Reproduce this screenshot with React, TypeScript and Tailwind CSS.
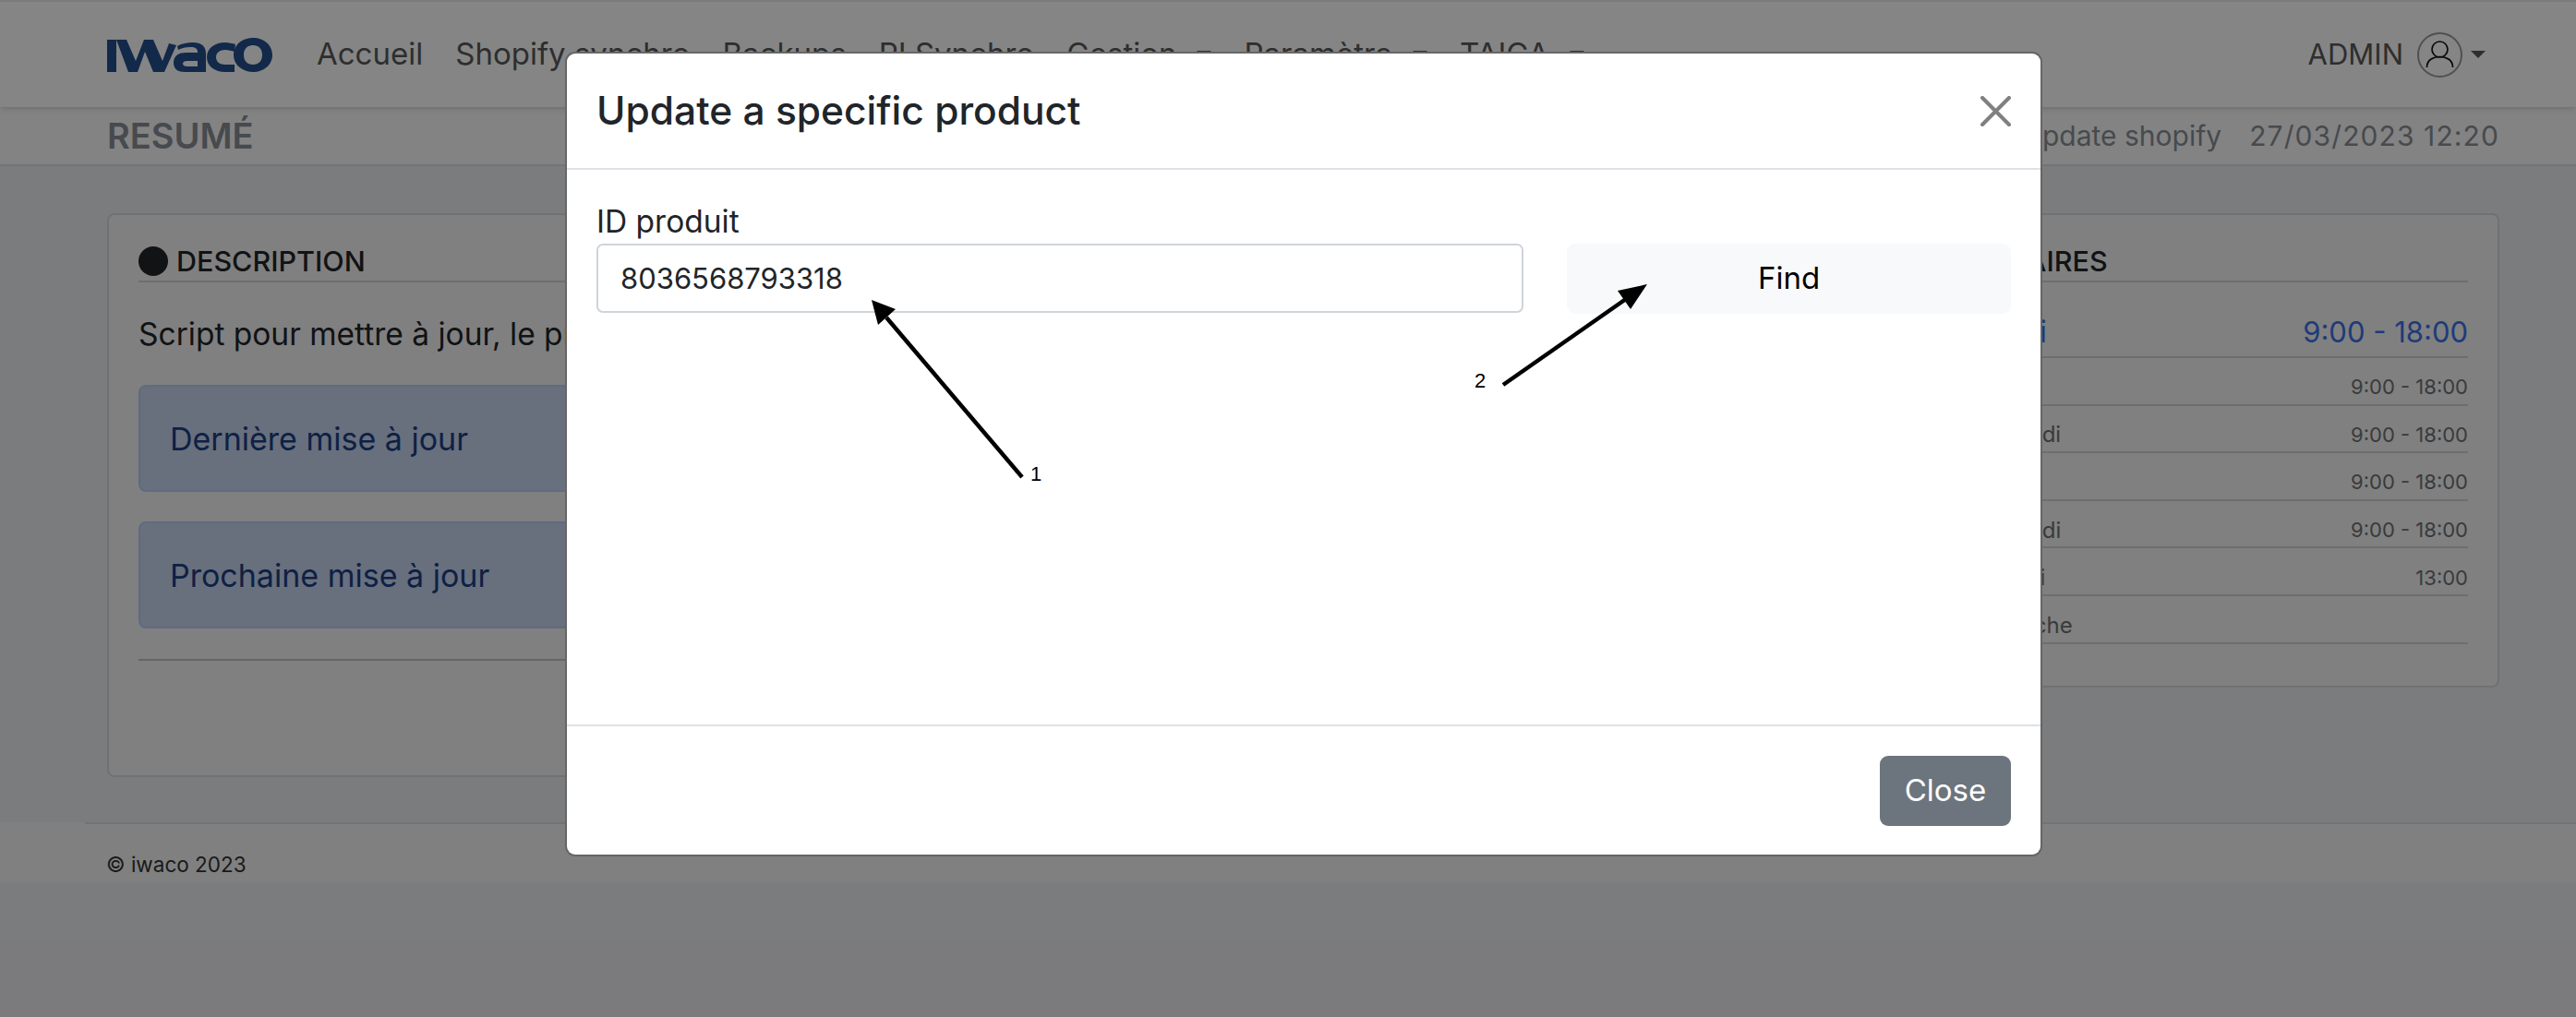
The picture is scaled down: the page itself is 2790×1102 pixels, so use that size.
const font = "font-['Inter','Liberation_Sans',sans-serif]";

const navLinks = [
  { label: "Accueil", caret: false },
  { label: "Shopify synchro", caret: false },
  { label: "Backups", caret: false },
  { label: "PI Synchro", caret: false },
  { label: "Gestion", caret: true },
  { label: "Paramètre", caret: true },
  { label: "TAIGA", caret: true },
];

const hours = [
  { day: "Mardi", time: "9:00 - 18:00" },
  { day: "Mercredi", time: "9:00 - 18:00" },
  { day: "Jeudi", time: "9:00 - 18:00" },
  { day: "Vendredi", time: "9:00 - 18:00" },
  { day: "Samedi", time: "13:00" },
  { day: "Dimanche", time: "" },
];

function Caret() {
  return <span className="inline-block border-x-[8.5px] border-t-[8.5px] border-x-transparent border-t-[#595959]" />;
}

function Logo() {
  return (
    <svg viewBox="0 0 179 37" className="h-[37px] w-[179px]" fill="#244f8f">
      <path d="M0 2h10v35H0z" />
      <path d="M10 2h11l10 23L40 2h10l10 23 7-19 8 2-13 29H50L41 15 33 37H23z" />
      <path d="M76 9c5-3 11-4 17-4 9 0 14 4 14 12v20H84c-7 0-12-3-12-10 0-8 6-11 14-11h12v-1c0-3-2-5-8-5-5 0-9 1-13 3zm22 16H87c-3 0-5 1-5 3s2 3 5 3h11z" />
      <path d="M139 7c-3-1-8-2-11-2-11 0-20 6-20 16s9 16 20 16h10v-8h-10c-6 0-10-3-10-8s4-8 10-8c3 0 7 1 10 2z" />
      <path fillRule="evenodd" d="M158 0c12 0 21 8 21 18.500S170 37 158 37s-21-8-21-18.500S146 0 158 0zm0 8c-6 0-10 4-10 10.500S152 29 158 29s10-4 10-10.500S164 8 158 8z" />
    </svg>
  );
}

function AlertBox({ label }: { label: string }) {
  return (
    <div className="flex h-[116px] items-center rounded-lg border-2 border-[#b6cdf5] bg-[#c8d5f0] px-[32px] text-[34px] text-[#1c3f85]">
      {label}
    </div>
  );
}

export default function App() {
  return (
    <div className={`${font} relative h-[1102px] w-[2790px] overflow-hidden bg-[#ecedf0]`}>
      {/* Navbar */}
      <nav className="relative flex h-[116px] items-center justify-between border-t-2 border-[#ececec] bg-white pl-[116px] pr-[98px] shadow-md">
        <div className="flex items-center">
          <Logo />
          <ul className="ml-[48px] flex items-center gap-[35px] text-[33px] text-[#595959]">
            {navLinks.map((link) => (
              <li key={link.label} className="flex items-center gap-[22px]">
                {link.label}
                {link.caret && <Caret />}
              </li>
            ))}
          </ul>
        </div>
        <div className="flex items-center gap-[15px] text-[31px] text-[#595959]">
          ADMIN
          <svg viewBox="0 0 49 49" className="h-[49px] w-[49px]" fill="none">
            <circle cx="24.500" cy="24.500" r="23.500" stroke="#9a9a9a" strokeWidth="2" />
            <circle cx="24.500" cy="18.500" r="8.500" stroke="#111" strokeWidth="1.700" />
            <path d="M10.500 38C10.500 30 17 26.500 24.500 26.500S38.500 30 38.500 38" stroke="#111" strokeWidth="1.700" />
          </svg>
          <span className="ml-[-6px] flex">
            <Caret />
          </span>
        </div>
      </nav>

      {/* Page title */}
      <div className="flex h-[64px] items-center justify-between border-b-2 border-[#dedede] bg-[#fbfbfb] pl-[116px] pr-[83px] text-[#888f96]">
        <h1 className="text-[38px] font-semibold">RESUMÉ</h1>
        <div className="flex gap-[30px] text-[30px]">
          <span>Update shopify</span>
          <span className="tracking-[1.1px]">27/03/2023 12:20</span>
        </div>
      </div>

      {/* Cards */}
      <main className="flex h-[711px] items-start gap-[32px] pl-[116px] pr-[83px] pt-[51px]">
        <section className="h-[611px] flex-1 rounded-lg border-2 border-[#d8d8d8] bg-[#f6f6f6] px-[32px] pt-[34px]">
          <h2 className="flex items-center gap-[9px] border-b-2 border-[#d4d4d4] pb-[5px] text-[30.500px] font-medium leading-[32px] text-[#212529]">
            <span className="h-[32px] w-[32px] rounded-full bg-[#212529]" />
            DESCRIPTION
          </h2>
          <p className="mt-[36px] whitespace-nowrap text-[33.500px] leading-[40px] text-[#212529]">
            Script pour mettre à jour, le prix et le stock des produits shopify
          </p>
          <div className="mt-[35px] flex flex-col gap-[32px]">
            <AlertBox label="Dernière mise à jour" />
            <AlertBox label="Prochaine mise à jour" />
          </div>
          <hr className="mt-[33px] border-t-2 border-[#c4c4c4]" />
        </section>

        <section className="h-[514px] w-[667px] rounded-lg border-2 border-[#d8d8d8] bg-[#f6f6f6] px-[32px] pt-[34px]">
          <h2 className="flex items-center gap-[23px] border-b-2 border-[#d4d4d4] pb-[5px] text-[30.500px] font-medium leading-[32px] text-[#212529]">
            <span className="h-[32px] w-[32px] rounded-full bg-[#212529]" />
            HORAIRES
          </h2>
          <div className="flex h-[82px] items-center justify-between border-b-2 border-[#d4d4d4] pl-[57px] pt-[28px] text-[31px] text-[#3a72e8]">
            <span className="text-[33px]">Lundi</span>
            <span>9:00 - 18:00</span>
          </div>
          {hours.map((row) => (
            <div key={row.day} className="flex h-[51.600px] items-center justify-between border-b-2 border-[#d4d4d4] pl-[57px] pt-[14px] text-[22px] text-[#6c7176]">
              <span className="text-[24px]">{row.day}</span>
              <span>{row.time}</span>
            </div>
          ))}
        </section>
      </main>

      {/* Footer */}
      <footer className="ml-[92px] flex h-[65px] items-center border-t-2 border-[#dcdcdc] bg-[#f6f6f6] pl-[23px] pt-[24px] text-[22.500px] text-[#333333] shadow-[-92px_0_0_#f6f6f6]">
        © iwaco 2023
      </footer>

      {/* Backdrop */}
      <div className="absolute inset-0 bg-black/[0.48]" />

      {/* Modal */}
      <div className="absolute left-[614px] top-[58px] flex h-[868px] w-[1596px] flex-col rounded-[9px] bg-white shadow-[0_0_0_2px_#666666]">
        <header className="flex h-[126px] items-center justify-between border-b-2 border-[#dee2e6] px-[32px]">
          <h3 className="text-[42.500px] font-medium text-[#212529]">Update a specific product</h3>
          <svg viewBox="0 0 32 32" className="h-[33px] w-[33px]" stroke="#808080" strokeWidth="4" strokeLinecap="round">
            <path d="M2 2l28 28M30 2L2 30" />
          </svg>
        </header>

        <div className="relative h-[601px] px-[32px] pt-[33px]">
          <label className="block text-[33.500px] leading-[47px] text-[#212529]">ID produit</label>
          <div className="flex gap-[47px]">
            <input
              readOnly
              value="8036568793318"
              className="h-[75px] w-[1004px] rounded-[7px] border-2 border-[#ced4da] bg-white px-[24px] text-[31px] text-[#212529] outline-none"
            />
            <button className="h-[76px] w-[481px] rounded-[9px] bg-[#f8f9fa] text-[33px] text-black">Find</button>
          </div>

          {/* Annotation arrows */}
          <svg className="absolute left-0 top-0 h-[400px] w-[1596px]" viewBox="0 0 1596 400">
            <path d="M493 333L346 160" stroke="#000" strokeWidth="4.500" />
            <path d="M330 141L337 168L356 151z" fill="#000" />
            <path d="M1014 233L1147 140" stroke="#000" strokeWidth="4.500" />
            <path d="M1170 124L1138 131L1152 151z" fill="#000" />
          </svg>
          <span className="absolute left-[502px] top-[318px] font-['Liberation_Sans',sans-serif] text-[22px] leading-[24px] text-black">1</span>
          <span className="absolute left-[983px] top-[217px] font-['Liberation_Sans',sans-serif] text-[22px] leading-[24px] text-black">2</span>
        </div>

        <footer className="flex flex-1 items-center justify-end border-t-2 border-[#dee2e6] px-[32px]">
          <button className="h-[76px] w-[142px] rounded-[9px] bg-[#6c757d] text-[33px] text-white">Close</button>
        </footer>
      </div>
    </div>
  );
}
